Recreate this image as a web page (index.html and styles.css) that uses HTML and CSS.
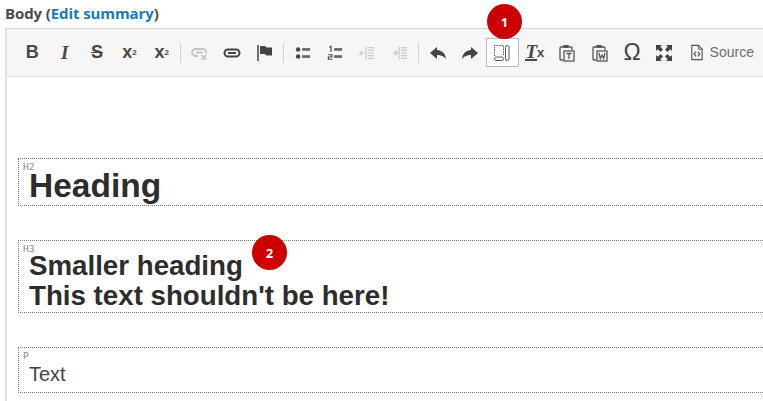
FILE: index.html
```html
<!DOCTYPE html>
<html lang="en">
<head>
    <meta charset="UTF-8">
    <title>Body editor</title>
    <link rel="stylesheet" href="styles.css">
</head>
<body>
    <div class="field-label">Body (<a href="#">Edit summary</a>)</div>

    <div class="editor">
        <div class="toolbar">
            <span class="btn glyph">B</span>
            <span class="btn glyph italic">I</span>
            <span class="btn glyph strike">S</span>
            <span class="btn glyph script">x<sup>2</sup></span>
            <span class="btn glyph script">x<sub>2</sub></span>
            <span class="sep"></span>
            <span class="btn"><svg viewBox="0 0 18 18"><g fill="none" stroke="#c4c4c4" stroke-width="1.800"><path d="M7 12H4.500a3.200 3.200 0 0 1 0-7h8a3.200 3.200 0 0 1 2.500 4.500"/><path d="M5 8.500h7"/></g><path d="M10.500 11l4.500 5m0-5l-4.500 5" stroke="#c4c4c4" stroke-width="1.800"/></svg></span>
            <span class="btn"><svg viewBox="0 0 18 18"><rect x="1.500" y="5.500" width="15" height="7" rx="3.500" fill="none" stroke="#444" stroke-width="2"/><path d="M5 9h8" stroke="#444" stroke-width="2"/></svg></span>
            <span class="btn"><svg viewBox="0 0 18 18"><path d="M2 1v16" stroke="#444" stroke-width="1.500"/><path d="M4 2h5l1.500 1.500H16v8h-5.500L9 10H4z" fill="#444"/></svg></span>
            <span class="sep"></span>
            <span class="btn"><svg class="small" viewBox="0 0 18 18"><g fill="#444"><circle cx="3.500" cy="5" r="2.500"/><circle cx="3.500" cy="13" r="2.500"/></g><g fill="#666"><rect x="8" y="3.500" width="9" height="3"/><rect x="8" y="11.500" width="9" height="3"/></g></svg></span>
            <span class="btn"><svg class="small" viewBox="0 0 18 18"><g fill="#666"><rect x="8" y="3.500" width="9" height="3"/><rect x="8" y="11.500" width="9" height="3"/></g><path d="M2.500 2.500L4.500 1.500V8" fill="none" stroke="#444" stroke-width="1.300"/><path d="M1.500 11h4v2.500h-4V16h4.500" fill="none" stroke="#444" stroke-width="1.300"/></svg></span>
            <span class="btn"><svg class="small" viewBox="0 0 18 18"><g stroke="#c8c8c8" stroke-width="1.400" fill="none"><path d="M10 3h7M10 6h7M10 9h7M10 12h7M10 15h7M8 2v14"/><path d="M1 9h5M3.500 6.500L1 9l2.500 2.500"/></g></svg></span>
            <span class="btn"><svg class="small" viewBox="0 0 18 18"><g stroke="#c8c8c8" stroke-width="1.400" fill="none"><path d="M10 3h7M10 6h7M10 9h7M10 12h7M10 15h7M8 2v14"/><path d="M1 9h5M3.500 6.500L6 9l-2.500 2.500"/></g></svg></span>
            <span class="sep"></span>
            <span class="btn"><svg viewBox="0 0 18 18"><path d="M8 3L1 9l7 6v-4c4 0 6.500 1 9 4-.5-5-3.500-8.500-9-9z" fill="#444"/></svg></span>
            <span class="btn"><svg viewBox="0 0 18 18"><path d="M10 3l7 6-7 6v-4c-4 0-6.500 1-9 4 .5-5 3.500-8.500 9-9z" fill="#444"/></svg></span>
            <span class="btn active"><svg viewBox="0 0 18 18"><path d="M1.500 12V1.500h9V11" fill="none" stroke="#555" stroke-width="1" stroke-dasharray="1.500 1"/><rect x="1.500" y="13" width="9" height="3.500" rx="1.700" fill="none" stroke="#555"/><rect x="12.500" y="1.500" width="3.500" height="15" rx="1.700" fill="none" stroke="#555"/></svg></span>
            <span class="btn glyph clear"><span class="clear-t">T</span><sub>x</sub></span>
            <span class="btn"><svg viewBox="0 0 18 18"><g fill="none" stroke="#555" stroke-width="1.300"><path d="M5 3H3a1 1 0 0 0-1 1v11a1 1 0 0 0 1 1h2M11 3h2a1 1 0 0 1 1 1v2"/><rect x="6" y="7" width="10" height="10"/><path d="M8.500 9.500h5M11 9.500V15"/></g><rect x="5" y="1" width="6" height="3" rx="1" fill="#555"/></svg></span>
            <span class="btn"><svg viewBox="0 0 18 18"><g fill="none" stroke="#555" stroke-width="1.300"><path d="M5 3H3a1 1 0 0 0-1 1v11a1 1 0 0 0 1 1h2M11 3h2a1 1 0 0 1 1 1v2"/><rect x="6" y="7" width="10" height="10"/><path d="M8 9l1.300 5.500L11 11l1.700 3.500L14 9"/></g><rect x="5" y="1" width="6" height="3" rx="1" fill="#555"/></svg></span>
            <span class="btn omega">Ω</span>
            <span class="btn"><svg viewBox="0 0 18 18"><g fill="#444"><path d="M1 1h6L5.200 2.800 8 5.600 5.600 8 2.800 5.200 1 7z"/><path d="M17 1v6l-1.800-1.800L12.400 8 10 5.600l2.800-2.800L11 1z"/><path d="M1 17v-6l1.800 1.800L5.600 10 8 12.400l-2.800 2.800L7 17z"/><path d="M17 17h-6l1.800-1.800L10 12.400l2.400-2.400 2.800 2.800L17 11z"/></g></svg></span>
            <span class="source">
                <svg viewBox="0 0 18 18"><path d="M4 1.500h7l4 4v11H4z" fill="none" stroke="#555" stroke-width="1.200"/><path d="M11 1.500v4h4" fill="none" stroke="#555"/><path d="M8.500 8L6.500 10.500l2 2.500M10.500 8l2 2.500-2 2.500" fill="none" stroke="#555" stroke-width="1.300"/></svg>
                Source
            </span>
        </div>

        <div class="content">
            <h2 class="block block-h2">Heading</h2>
            <h3 class="block block-h3">Smaller heading<br>This text shouldn't be here!</h3>
            <p class="block block-p">Text</p>
        </div>
    </div>

    <span class="marker marker-one">1</span>
    <span class="marker marker-two">2</span>
</body>
</html>
```

FILE: styles.css
```css
body {
    display: flex;
    flex-direction: column;
    margin: 0;
    height: 401px;
    padding: 4px 0 0 5px;
    box-sizing: border-box;
    position: relative;
    overflow: hidden;
    background: white;
    font-family: "Liberation Sans", Arial, sans-serif;
    color: #333;
}

.field-label {
    font-family: "Open Sans", sans-serif;
    font-size: 15px;
    font-weight: 700;
    letter-spacing: -0.1px;
    line-height: 18px;
    color: #4b4b4b;
}

.field-label a {
    color: #1a7ab8;
    text-decoration: none;
}

.editor {
    flex: 1;
    margin-top: 6px;
    border-left: 2px solid #e2e2e2;
    border-top: 1px solid #d6d6d6;
}

.toolbar {
    display: flex;
    align-items: center;
    height: 47px;
    padding-left: 9px;
    background: #f6f6f6;
    border-bottom: 1px solid #e0e0e0;
}

.btn {
    display: flex;
    flex: none;
    align-items: center;
    justify-content: center;
    width: 32.4px;
    height: 29px;
    box-sizing: border-box;
    color: #444;
}

.btn svg {
    width: 18px;
    height: 18px;
}

.btn svg.small {
    width: 16px;
    height: 16px;
}

.active {
    background: white;
    border: 1px solid #bcbcbc;
}

.glyph {
    font-size: 18px;
    font-weight: 700;
    color: #484848;
}

.italic {
    font-family: "Liberation Serif", serif;
    font-style: italic;
    font-size: 19px;
}

.strike {
    text-decoration: line-through;
}

.script sup, .script sub {
    font-size: 8px;
    line-height: 0;
}

.clear {
    font-family: "Liberation Serif", serif;
    font-size: 19px;
    font-style: italic;
}

.clear-t {
    border-bottom: 2px solid #484848;
    line-height: 15px;
}

.clear sub {
    font-family: "Liberation Sans", sans-serif;
    font-style: normal;
    font-size: 13px;
    line-height: 0;
}

.omega {
    font-size: 23px;
    color: #444;
}

.sep {
    flex: none;
    width: 1px;
    height: 20px;
    margin: 0 2.3px;
    background: #d2d2d2;
}

.source {
    display: flex;
    flex: none;
    align-items: center;
    gap: 5px;
    margin-left: 7px;
    padding-bottom: 1px;
    font-size: 14px;
    color: #6a6f78;
}

.source svg {
    width: 17px;
    height: 17px;
}

.content {
    padding: 81px 0 0 11px;
}

.block {
    position: relative;
    margin: 0;
    padding: 0 0 0 10px;
    border: 1px dotted #808080;
    border-right: 0;
    font-weight: 700;
    color: #2d2d2d;
}

.block::before {
    position: absolute;
    top: 3px;
    left: 4px;
    font-family: "DejaVu Sans Mono", monospace;
    font-size: 9.5px;
    font-weight: 400;
    line-height: 10px;
    color: #888;
}

.block-h2 {
    height: 46px;
    margin-bottom: 34px;
    font-size: 33.5px;
    line-height: 54px;
}

.block-h2::before {
    content: "H2";
}

.block-h3 {
    height: 61px;
    margin-bottom: 34px;
    padding-top: 10px;
    font-size: 27.7px;
    line-height: 30px;
}

.block-h3::before {
    content: "H3";
}

.block-p {
    height: 44px;
    font-size: 20px;
    font-weight: 400;
    line-height: 53px;
    color: #444;
}

.block-p::before {
    content: "P";
}

.marker {
    position: absolute;
    display: flex;
    align-items: center;
    justify-content: center;
    width: 35px;
    height: 35px;
    border-radius: 50%;
    background: #cc0000;
    color: white;
    font-family: "Open Sans", sans-serif;
    font-size: 13px;
    font-weight: 700;
}

.marker-one {
    top: 4px;
    left: 487px;
}

.marker-two {
    top: 235px;
    left: 252px;
}
```
